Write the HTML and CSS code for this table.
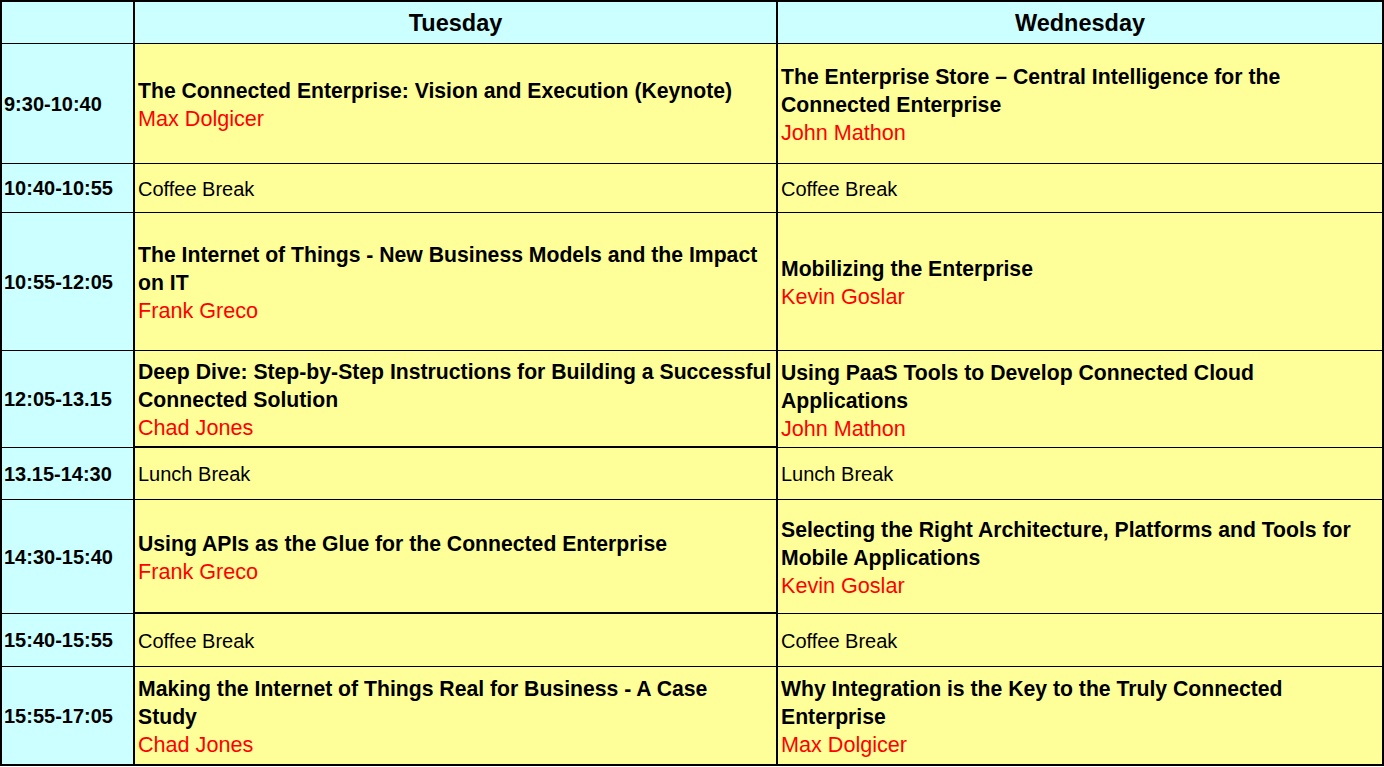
FILE: index.html
```html
<!DOCTYPE html>
<html>
<head>
<meta charset="utf-8">
<link rel="stylesheet" href="styles.css">
</head>
<body>
<table class="sched">
  <colgroup><col class="c-time"><col class="c-tue"><col class="c-wed"></colgroup>
  <tr class="r-head">
    <th class="time"></th>
    <th class="day">Tuesday</th>
    <th class="day">Wednesday</th>
  </tr>
  <tr class="r1">
    <td class="time">9:30-10:40</td>
    <td class="slot"><div class="t">The Connected Enterprise: Vision and Execution (Keynote)</div><div class="s">Max Dolgicer</div></td>
    <td class="slot"><div class="t">The Enterprise Store – Central Intelligence for the<br>Connected Enterprise</div><div class="s">John Mathon</div></td>
  </tr>
  <tr class="r2">
    <td class="time">10:40-10:55</td>
    <td class="slot brk">Coffee Break</td>
    <td class="slot brk">Coffee Break</td>
  </tr>
  <tr class="r3">
    <td class="time">10:55-12:05</td>
    <td class="slot"><div class="t">The Internet of Things - New Business Models and the Impact<br>on IT</div><div class="s">Frank Greco</div></td>
    <td class="slot"><div class="t">Mobilizing the Enterprise</div><div class="s">Kevin Goslar</div></td>
  </tr>
  <tr class="r4">
    <td class="time">12:05-13.15</td>
    <td class="slot thick"><div class="t">Deep Dive: Step-by-Step Instructions for Building a Successful<br>Connected Solution</div><div class="s">Chad Jones</div></td>
    <td class="slot"><div class="t">Using PaaS Tools to Develop Connected Cloud<br>Applications</div><div class="s">John Mathon</div></td>
  </tr>
  <tr class="r5">
    <td class="time">13.15-14:30</td>
    <td class="slot brk">Lunch Break</td>
    <td class="slot brk">Lunch Break</td>
  </tr>
  <tr class="r6">
    <td class="time">14:30-15:40</td>
    <td class="slot thick"><div class="t">Using APIs as the Glue for the Connected Enterprise</div><div class="s">Frank Greco</div></td>
    <td class="slot"><div class="t">Selecting the Right Architecture, Platforms and Tools for<br>Mobile Applications</div><div class="s">Kevin Goslar</div></td>
  </tr>
  <tr class="r7">
    <td class="time">15:40-15:55</td>
    <td class="slot brk">Coffee Break</td>
    <td class="slot brk">Coffee Break</td>
  </tr>
  <tr class="r8">
    <td class="time">15:55-17:05</td>
    <td class="slot"><div class="t">Making the Internet of Things Real for Business - A Case<br>Study</div><div class="s">Chad Jones</div></td>
    <td class="slot"><div class="t">Why Integration is the Key to the Truly Connected<br>Enterprise</div><div class="s">Max Dolgicer</div></td>
  </tr>
</table>
</body>
</html>
```

FILE: styles.css
```css
html, body {
  margin: 0;
  padding: 0;
  background: #ffffff;
}

.sched {
  border-collapse: collapse;
  table-layout: fixed;
  width: 1382px;
  font-family: "Liberation Sans", Arial, sans-serif;
  color: #000;
  border: 2px solid #000;
}

.c-time { width: 133px; }
.c-tue { width: 643px; }
.c-wed { width: 606px; }

.sched th,
.sched td {
  border-top: 1px solid #000;
  border-bottom: 1px solid #000;
  border-left: 2px solid #000;
  border-right: 2px solid #000;
  padding: 0 0 0 3px;
  vertical-align: middle;
  text-align: left;
  white-space: nowrap;
  overflow: hidden;
}

.sched th {
  background: #ccffff;
  font-size: 23.5px;
  font-weight: bold;
  text-align: center;
  padding: 2px 0 0 0;
}

.sched .time {
  background: #ccffff;
  font-size: 20px;
  font-weight: bold;
  padding: 2px 0 0 2px;
}

.sched .slot {
  background: #ffff99;
  font-size: 20px;
  line-height: 28px;
  padding: 4px 0 0 3px;
}

.sched .slot.brk {
  font-weight: normal;
  padding-top: 2px;
}

.sched .slot.thick {
  border-bottom: 2px solid #000;
}

.t {
  font-weight: bold;
  font-size: 21.2px;
}

.s {
  color: #ff0000;
  font-size: 21.6px;
}

.r-head { height: 42px; }
.r1 { height: 120px; }
.r2 { height: 49px; }
.r3 { height: 138px; }
.r4 { height: 97px; }
.r5 { height: 52px; }
.r6 { height: 114px; }
.r7 { height: 53px; }
.r8 { height: 99px; }
```
